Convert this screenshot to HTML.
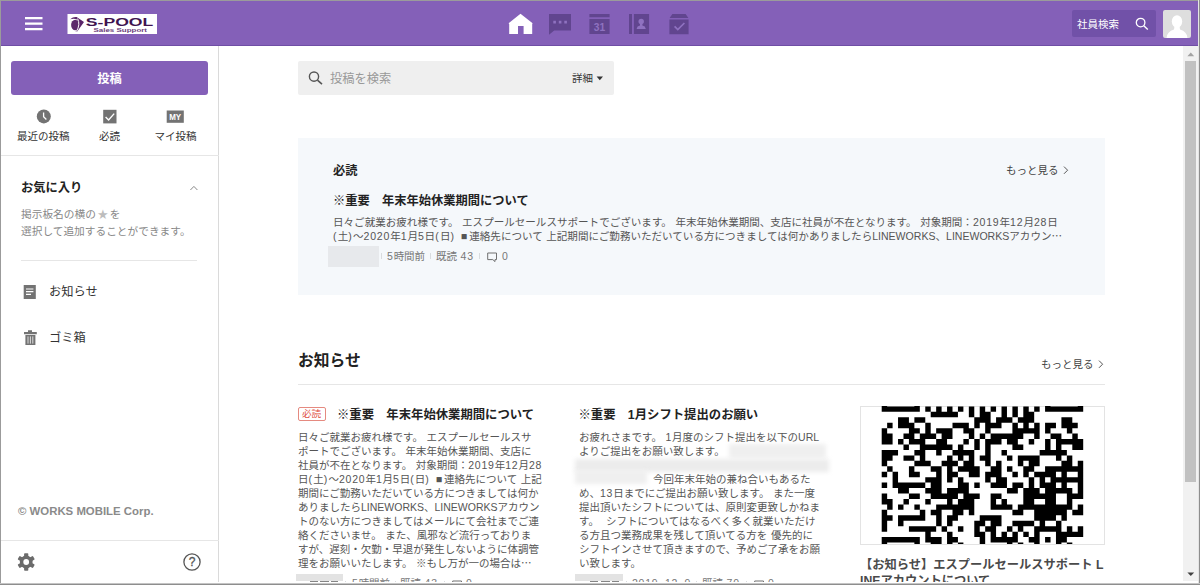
<!DOCTYPE html>
<html lang="ja">
<head>
<meta charset="utf-8">
<title>S-POOL Sales Support</title>
<style>
*{margin:0;padding:0;box-sizing:border-box}
html,body{width:1200px;height:585px;overflow:hidden;background:#fff}
body{position:relative;font-family:"Liberation Sans","Noto Sans CJK JP",sans-serif;color:#333;font-size:10.5px}
.abs,.t,svg{position:absolute}
.t{white-space:nowrap;line-height:1}
b{font-weight:700}
/* frame */
#ft{left:0;top:0;width:1200px;height:1px;background:#9b9b9b}
#fl{left:0;top:0;width:1px;height:585px;background:#9b9b9b}
#fr{left:1198px;top:0;width:2px;height:585px;background:linear-gradient(90deg,#e4e4e4 0,#e4e4e4 50%,#8e8e8e 50%)}
#fb{left:0;top:583px;width:1200px;height:2px;background:linear-gradient(180deg,#c4c4c4 0,#c4c4c4 50%,#8e8e8e 50%)}
#clip{left:0;top:0;width:1198px;height:582px;overflow:hidden}
/* header */
#hd{left:0;top:0;width:1198px;height:46px;background:#8460b8;border-bottom:1px solid #6f4ea5}
#logo{left:67px;top:14px;width:90px;height:20px;background:#fff}
#hsearch{left:1072px;top:10px;width:84px;height:27px;background:#7151a8;border-radius:2px}
#avatar{left:1163px;top:10px;width:28px;height:28px;background:#dedede;border-radius:2px;overflow:hidden}
/* sidebar */
#sb{left:0;top:46px;width:219px;height:536px;border-right:1px solid #dadada;background:#fff}
#postbtn{left:11px;top:61px;width:197px;height:34px;overflow:hidden;background:#8460b8;border-radius:3px;color:#fff;font-weight:700;font-size:12.25px;text-align:center;line-height:37px}
.hl{height:1px;background:#e6e6e6}
/* scrollbar */
#sc{left:1183px;top:46px;width:15px;height:535px;background:#f1f1f1}
#th{left:1185px;top:61px;width:11px;height:421px;background:#c1c1c1}
/* main */
#search{left:298px;top:60.5px;width:316px;height:34.5px;background:#efefef;border-radius:2px}
#pin{left:298px;top:138px;width:807px;height:157px;background:#f5f8fb}
.body{color:#555;font-size:10.5px;line-height:14px;white-space:nowrap;word-spacing:.6px}
i{font-style:normal;letter-spacing:.78px}
u{text-decoration:none;display:inline-block;width:1em;text-align:center}
em{font-style:normal;letter-spacing:1.2px}
s{text-decoration:none;font-family:"Noto Sans CJK JP",sans-serif}
.meta{color:#777;font-size:10.5px;word-spacing:.6px}
.dash{top:581px;height:1px;background:#858585}
.sep{width:1px;height:6px;background:#d9dcdf}
.blur{position:absolute;background:#efefef;filter:blur(2px)}
</style>
</head>
<body>
<div id="clip" class="abs">
  <!-- HEADER -->
  <div id="hd" class="abs"></div>
  <svg style="left:25px;top:17px" width="18" height="14" viewBox="0 0 18 14"><path d="M0 0h17.5v2.2H0zM0 5.5h17.5v2.2H0zM0 11h17.5v2.2H0z" fill="#fff"/></svg>

  <svg style="left:67px;top:14px" width="90" height="20" viewBox="0 0 90 20">
    <rect x="0.5" y="0" width="89.5" height="20.2" fill="#fff"/>
    <path d="M3.2 5.2 Q6 2.6 9.6 3 L17 8 L10.2 17.6 L8.6 17.8 Q12.6 11 10 5.4 Q7 4 3.2 5.2Z" fill="#5a2468"/>
    <ellipse cx="8.2" cy="11" rx="4.1" ry="5.3" fill="#5e2a6c"/>
    <path d="M10.6 4.6 Q13.6 10.5 9.4 17.6" stroke="#fff" stroke-width="1" fill="none"/>
    <text x="18.8" y="12.1" font-family="'Liberation Sans',sans-serif" font-weight="700" font-size="10.6" fill="#3f1450" textLength="67.5" lengthAdjust="spacingAndGlyphs">S-POOL</text>
    <text x="26.5" y="17.7" font-family="'Liberation Sans',sans-serif" font-weight="700" font-size="6.2" fill="#6a3a7a" textLength="53.5" lengthAdjust="spacingAndGlyphs">Sales Support</text>
  </svg>
  <!-- home -->
  <svg style="left:508px;top:13px" width="26" height="22" viewBox="0 0 26 22"><path d="M12.5 0.7 L24.6 10.2 L24.2 11 L24.2 21 L15.6 21 L15.6 13 L10 13 L10 21 L1.2 21 L1.2 11 L0.6 10.2Z" fill="#fff"/></svg>
  <!-- chat -->
  <svg style="left:549px;top:14px" width="23" height="21" viewBox="0 0 23 21"><path d="M0 0h22v16.6H5.2L0 20.8z" fill="#61458f"/><path d="M4.3 6.8h2.6v2.6H4.3zM9.8 6.8h2.6v2.6H9.8zM15.3 6.8h2.6v2.6h-2.6z" fill="#8f72c0"/></svg>
  <!-- calendar -->
  <svg style="left:589px;top:14px" width="22" height="21" viewBox="0 0 22 21"><path d="M0.4 0h20.2v3.2H0.4zM0.4 5.1h20.2v14.9H0.4z" fill="#61458f"/><text x="10.5" y="17.1" text-anchor="middle" font-family="'Liberation Sans',sans-serif" font-weight="700" font-size="11.2" fill="#8f72c0" textLength="11.4" lengthAdjust="spacingAndGlyphs">31</text></svg>
  <!-- contacts -->
  <svg style="left:629px;top:14px" width="21" height="21" viewBox="0 0 21 21"><path d="M0 0h3v20H0zM4.9 0h15.2v20H4.9z" fill="#61458f"/><circle cx="12.2" cy="7.4" r="2.7" fill="#8f72c0"/><path d="M7.6 15 L8.6 12.6 L11 11.4 L11 9.6 H13.4 L13.4 11.4 L15.8 12.6 L16.8 15z" fill="#8f72c0"/></svg>
  <!-- task -->
  <svg style="left:669px;top:14px" width="21" height="21" viewBox="0 0 21 21"><path d="M3.4 0h13.2L19.4 4H0.6zM0.4 5.6h19.2v14.6H0.4z" fill="#61458f"/><path d="M5.6 12.4l3.2 3.2 6.6-6.6" stroke="#8f72c0" stroke-width="1.7" fill="none"/></svg>
  <div id="hsearch" class="abs"></div>
  <div class="t" style="left:1077px;top:19px;font-size:10.5px;color:#fff">社員検索</div>
  <!-- header search magnifier -->
  <svg style="left:1135px;top:17px" width="14" height="14" viewBox="0 0 14 14"><circle cx="5.6" cy="5.6" r="4.3" stroke="#fff" stroke-width="1.3" fill="none"/><path d="M8.8 8.8L12.8 12.6" stroke="#fff" stroke-width="1.4"/></svg>
  <div id="avatar" class="abs"><svg style="left:0;top:0" width="28" height="28" viewBox="0 0 28 28"><ellipse cx="14" cy="11.5" rx="5.2" ry="6.2" fill="#fff"/><path d="M3.5 28 Q4 21.5 11 19.5 L11.5 16 H16.5 L17 19.5 Q24 21.5 24.5 28z" fill="#fff"/></svg></div>

  <!-- SIDEBAR -->
  <div id="sb" class="abs"></div>
  <div id="postbtn" class="abs">投稿</div>
  <div class="t" style="left:17px;top:131px;font-size:10.5px;color:#333">最近の投稿</div>
  <div class="t" style="left:99px;top:131px;font-size:10.5px;color:#333">必読</div>
  <div class="t" style="left:154.5px;top:131px;font-size:10.5px;color:#333">マイ投稿</div>
  <div class="abs hl" style="left:1px;top:155px;width:218px"></div>
  <div class="t" style="left:21px;top:182px;font-size:12.25px;font-weight:700;color:#222">お気に入り</div>
  <div class="t" style="left:21px;top:209px;font-size:10.7px;color:#888">掲示板名の横の<span style="color:#bdbdbd;font-family:'Noto Sans CJK JP',sans-serif;display:inline-block;width:14px;text-align:center">★</span>を</div>
  <div class="t" style="left:21px;top:225.5px;font-size:10.7px;color:#888">選択して追加することができます。</div>
  <div class="abs hl" style="left:21px;top:260px;width:176px"></div>
  <div class="t" style="left:49px;top:286px;font-size:12.25px;color:#333">お知らせ</div>
  <div class="t" style="left:49px;top:332px;font-size:12.25px;color:#333">ゴミ箱</div>
  <div class="t" style="left:18px;top:506px;font-size:11.4px;font-weight:700;color:#8a8a8a">© WORKS MOBILE Corp.</div>
  <div class="abs hl" style="left:1px;top:540px;width:218px"></div>

  <svg style="left:36px;top:109px" width="16" height="16" viewBox="0 0 16 16"><circle cx="7.8" cy="7.4" r="7" fill="#737373"/><path d="M7.6 3.4V7.8L10.4 10.4" stroke="#fff" stroke-width="1.3" fill="none"/></svg>
  <svg style="left:103px;top:109px" width="15" height="16" viewBox="0 0 15 16"><rect x="0.2" y="0.8" width="13.3" height="13.6" fill="#737373"/><path d="M2.6 8l3 3 5.6-6.4" stroke="#fff" stroke-width="1.4" fill="none"/></svg>
  <svg style="left:166px;top:110px" width="19" height="14" viewBox="0 0 19 14"><rect x="0.7" y="0.5" width="17.1" height="12.3" fill="#737373"/><text x="9.2" y="9.9" text-anchor="middle" font-family="'Liberation Sans',sans-serif" font-weight="700" font-size="8.2" fill="#fff" textLength="12" lengthAdjust="spacingAndGlyphs">MY</text></svg>
  <svg style="left:189px;top:184px" width="10" height="8" viewBox="0 0 10 8"><path d="M1.4 6L4.9 2.4 8.4 6" stroke="#888" stroke-width="1" fill="none"/></svg>
  <svg style="left:23px;top:285px" width="14" height="15" viewBox="0 0 14 15"><rect x="0.7" y="0" width="12.1" height="14" fill="#737373"/><path d="M3 4h7.4M3 6.7h7.4M3 9.4h5" stroke="#fff" stroke-width="1.2"/></svg>
  <svg style="left:23px;top:330px" width="15" height="16" viewBox="0 0 15 16"><path d="M5 0.3h4v1.7H5zM1 2h12.8v2.2H1zM2.4 5h10v10H2.4z" fill="#737373"/><path d="M5 6.4v7.2M7.4 6.4v7.2M9.8 6.4v7.2" stroke="#ddd" stroke-width="1"/></svg>
  <svg style="left:17px;top:553px" width="19" height="19" viewBox="-9.5 -9.5 19 19"><g fill="#6b6b6b" transform="translate(-0.3 -0.5)"><circle r="6.4"/><rect x="-2.1" y="-8.8" width="4.2" height="17.6" rx="0.8"/><rect x="-2.1" y="-8.8" width="4.2" height="17.6" rx="0.8" transform="rotate(60)"/><rect x="-2.1" y="-8.8" width="4.2" height="17.6" rx="0.8" transform="rotate(120)"/><circle r="2.9" fill="#fff"/></g></svg>
  <svg style="left:183px;top:553px" width="19" height="19" viewBox="0 0 19 19"><circle cx="9" cy="9" r="8.1" stroke="#555" stroke-width="1.3" fill="none"/><text x="9" y="13" text-anchor="middle" font-family="'Liberation Sans',sans-serif" font-weight="400" font-size="12" fill="#555" stroke="#555" stroke-width=".3">?</text></svg>

  <!-- MAIN -->
  <div id="search" class="abs"></div>
  <div class="t" style="left:330px;top:73px;font-size:12.25px;color:#999">投稿を検索</div>
  <div class="t" style="left:572px;top:73px;font-size:10.5px;color:#333">詳細</div>


  <svg style="left:308px;top:70px" width="16" height="16" viewBox="0 0 16 16"><circle cx="6" cy="6.6" r="4.6" stroke="#555" stroke-width="1.4" fill="none"/><path d="M9.4 10.2L14 14.2" stroke="#555" stroke-width="1.6"/></svg>
  <svg style="left:596px;top:76px" width="8" height="5" viewBox="0 0 8 5"><path d="M0.6 0.6h6.4L3.8 4.2z" fill="#333"/></svg>
  <div id="pin" class="abs"></div>
  <div class="t" style="left:333px;top:165px;font-size:12.25px;font-weight:700;color:#222">必読</div>
  <div class="t" style="left:1006px;top:165px;font-size:10.5px;color:#444">もっと見る</div>
  <div class="t" style="left:333px;top:194.5px;font-size:12.25px;font-weight:700;color:#222">※重要　年末年始休業期間について</div>
  <div class="abs body" style="left:333px;top:214.5px;font-size:10.56px">日々ご就業お疲れ様です。 エスプールセールスサポートでございます。 年末年始休業期間、支店に社員が不在となります。 対象期間：<i>2019</i>年<i>12</i>月<i>28</i>日<br><em>(</em>土<em>)</em>～<i>2020</i>年<i>1</i>月<i>5</i>日<em>(</em>日<em>)</em> <u>■</u>連絡先について 上記期間にご勤務いただいている方につきましては何かありましたらLINEWORKS、LINEWORKSアカウン<s>…</s></div>
  <div class="blur" style="left:327.5px;top:246px;width:51.5px;height:21px;background:#e7e9ec;filter:blur(.7px)"></div>
  <div class="t meta" style="left:387px;top:251px"><i>5</i>時間前</div>
  <div class="t meta" style="left:436px;top:251px">既読 <i><i>43</i></i></div>
  <div class="t meta" style="left:502px;top:251px"><i><i>0</i></i></div>

  <div class="t" style="left:298px;top:353px;font-size:15.75px;font-weight:700;color:#222">お知らせ</div>
  <div class="t" style="left:1041px;top:359px;font-size:10.5px;color:#444">もっと見る</div>
  <div class="abs hl" style="left:298px;top:384px;width:807px"></div>

  <!-- col1 -->
  <div class="abs" style="left:298px;top:407px;width:28px;height:14px;border:1px solid #e58a80;border-radius:2px"></div>
  <div class="t" style="left:302px;top:409px;font-size:9.6px;color:#e0503f">必読</div>
  <div class="t" style="left:337px;top:408.7px;font-size:12.35px;font-weight:700;color:#222">※重要　年末年始休業期間について</div>
  <div class="abs body" style="left:298px;top:430px">日々ご就業お疲れ様です。 エスプールセールスサ<br>ポートでございます。 年末年始休業期間、支店に<br>社員が不在となります。 対象期間：<i>2019</i>年<i>12</i>月<i>28</i><br>日<em>(</em>土<em>)</em>～<i>2020</i>年<i>1</i>月<i>5</i>日<em>(</em>日<em>)</em> <u>■</u>連絡先について 上記<br>期間にご勤務いただいている方につきましては何か<br>ありましたらLINEWORKS、LINEWORKSアカウン<br>トのない方につきましてはメールにて会社までご連<br>絡くださいませ。 また、風邪など流行っておりま<br>すが、遅刻・欠勤・早退が発生しないように体調管<br>理をお願いいたします。 ※もし万が一の場合は<s>…</s></div>
  <div class="blur" style="left:296px;top:574px;width:47px;height:7px;background:#e3e3e3;filter:blur(.5px)"></div><div class="abs dash" style="left:309.5px;width:8px"></div><div class="abs dash" style="left:319.5px;width:9px"></div><div class="abs dash" style="left:331px;width:7px"></div>
  <div class="t meta" style="left:352px;top:578px"><i>5</i>時間前</div>
  <div class="t meta" style="left:400px;top:578px">既読 <i><i>43</i></i></div>
  <div class="t meta" style="left:466px;top:578px"><i><i>0</i></i></div>

  <!-- col2 -->
  <div class="t" style="left:578.5px;top:408.7px;font-size:12.35px;font-weight:700;color:#222">※重要　1月シフト提出のお願い</div>
  <div class="abs body" style="left:579px;top:430px">お疲れさまです。 <i>1</i>月度のシフト提出を以下のURL<br>よりご提出をお願い致します。<br>&nbsp;<br><span style="padding-left:74px">今回年末年始の兼ね合いもあるた</span><br>め、<i>13</i>日までにご提出お願い致します。 また一度<br>提出頂いたシフトについては、原則変更致しかねま<br>す。&nbsp; シフトについてはなるべく多く就業いただけ<br>る方且つ業務成果を残して頂いてる方を 優先的に<br>シフトインさせて頂きますので、予めご了承をお願<br>い致します。</div>
  <div class="blur" style="left:729px;top:444px;width:97px;height:14px"></div>
  <div class="blur" style="left:575px;top:459px;width:254px;height:13px;background:#ececec"></div>
  <div class="blur" style="left:575px;top:470px;width:72px;height:14px"></div>
  <div class="blur" style="left:575px;top:573.5px;width:48px;height:7.2px;background:#e3e3e3;filter:blur(.5px)"></div><div class="abs dash" style="left:590px;width:8px"></div><div class="abs dash" style="left:600.5px;width:9px"></div><div class="abs dash" style="left:612px;width:6.5px"></div>
  <div class="t meta" style="left:632px;top:578px"><i><i>2019</i></i>. <i><i>12</i></i>. <i><i>9</i></i>.</div>
  <div class="t meta" style="left:702px;top:578px">既読 <i><i>70</i></i></div>
  <div class="t meta" style="left:768px;top:578px"><i><i>0</i></i></div>

  <!-- col3 -->
  <div class="abs" id="qrbox" style="left:860px;top:406px;width:245px;height:139px;border:1px solid #e3e3e3;overflow:hidden"></div>
  <svg style="left:861px;top:406px" width="243" height="138.4" viewBox="-3.801 5.931 44.620 25.413" preserveAspectRatio="none"><path d="M0 5h1v1h-1zM6 5h1v1h-1zM30 5h1v1h-1zM36 5h1v1h-1zM0 6h7v1h-7zM8 6h1v1h-1zM10 6h1v1h-1zM12 6h1v1h-1zM14 6h1v1h-1zM16 6h1v1h-1zM18 6h1v1h-1zM20 6h1v1h-1zM22 6h1v1h-1zM24 6h1v1h-1zM26 6h1v1h-1zM28 6h1v1h-1zM30 6h7v1h-7zM9 7h5v1h-5zM16 7h1v1h-1zM18 7h2v1h-2zM22 7h1v1h-1zM24 7h1v1h-1zM26 7h2v1h-2zM3 8h2v1h-2zM6 8h2v1h-2zM17 8h3v1h-3zM21 8h3v1h-3zM25 8h3v1h-3zM33 8h2v1h-2zM1 9h1v1h-1zM3 9h3v1h-3zM8 9h1v1h-1zM13 9h3v1h-3zM17 9h1v1h-1zM19 9h3v1h-3zM24 9h1v1h-1zM26 9h1v1h-1zM28 9h1v1h-1zM30 9h2v1h-2zM33 9h3v1h-3zM0 10h1v1h-1zM5 10h2v1h-2zM8 10h1v1h-1zM10 10h3v1h-3zM15 10h2v1h-2zM19 10h1v1h-1zM24 10h5v1h-5zM30 10h1v1h-1zM34 10h1v1h-1zM0 11h2v1h-2zM4 11h2v1h-2zM7 11h3v1h-3zM11 11h2v1h-2zM16 11h1v1h-1zM18 11h1v1h-1zM20 11h6v1h-6zM28 11h1v1h-1zM31 11h2v1h-2zM35 11h1v1h-1zM0 12h2v1h-2zM3 12h1v1h-1zM5 12h3v1h-3zM10 12h2v1h-2zM15 12h1v1h-1zM17 12h1v1h-1zM19 12h3v1h-3zM23 12h2v1h-2zM27 12h1v1h-1zM30 12h1v1h-1zM32 12h5v1h-5zM4 13h1v1h-1zM7 13h6v1h-6zM14 13h1v1h-1zM17 13h1v1h-1zM19 13h1v1h-1zM24 13h2v1h-2zM30 13h1v1h-1zM32 13h1v1h-1zM35 13h2v1h-2zM0 14h3v1h-3zM6 14h2v1h-2zM10 14h1v1h-1zM13 14h4v1h-4zM19 14h1v1h-1zM22 14h1v1h-1zM29 14h5v1h-5zM0 15h2v1h-2zM4 15h2v1h-2zM7 15h1v1h-1zM12 15h1v1h-1zM14 15h1v1h-1zM16 15h1v1h-1zM18 15h2v1h-2zM23 15h1v1h-1zM25 15h4v1h-4zM32 15h1v1h-1zM34 15h1v1h-1zM0 16h1v1h-1zM6 16h3v1h-3zM11 16h3v1h-3zM15 16h2v1h-2zM19 16h1v1h-1zM21 16h1v1h-1zM25 16h1v1h-1zM27 16h2v1h-2zM33 16h2v1h-2zM36 16h1v1h-1zM1 17h1v1h-1zM5 17h1v1h-1zM9 17h2v1h-2zM12 17h1v1h-1zM14 17h4v1h-4zM20 17h2v1h-2zM23 17h1v1h-1zM26 17h2v1h-2zM30 17h7v1h-7zM0 18h1v1h-1zM2 18h1v1h-1zM5 18h2v1h-2zM10 18h1v1h-1zM12 18h2v1h-2zM16 18h2v1h-2zM19 18h3v1h-3zM24 18h1v1h-1zM26 18h1v1h-1zM28 18h4v1h-4zM33 18h1v1h-1zM36 18h1v1h-1zM2 19h1v1h-1zM8 19h3v1h-3zM12 19h1v1h-1zM14 19h1v1h-1zM19 19h1v1h-1zM21 19h2v1h-2zM27 19h1v1h-1zM29 19h1v1h-1zM31 19h6v1h-6zM0 20h1v1h-1zM2 20h6v1h-6zM9 20h2v1h-2zM14 20h2v1h-2zM17 20h1v1h-1zM20 20h3v1h-3zM24 20h2v1h-2zM27 20h1v1h-1zM29 20h3v1h-3zM33 20h1v1h-1zM36 20h1v1h-1zM3 21h2v1h-2zM8 21h3v1h-3zM12 21h4v1h-4zM23 21h2v1h-2zM26 21h3v1h-3zM30 21h5v1h-5zM36 21h1v1h-1zM0 22h1v1h-1zM5 22h2v1h-2zM9 22h5v1h-5zM15 22h3v1h-3zM20 22h2v1h-2zM26 22h6v1h-6zM34 22h3v1h-3zM0 23h2v1h-2zM4 23h1v1h-1zM8 23h1v1h-1zM12 23h1v1h-1zM14 23h3v1h-3zM20 23h1v1h-1zM22 23h1v1h-1zM26 23h2v1h-2zM30 23h2v1h-2zM34 23h1v1h-1zM1 24h1v1h-1zM3 24h1v1h-1zM6 24h1v1h-1zM10 24h7v1h-7zM20 24h4v1h-4zM25 24h10v1h-10zM36 24h1v1h-1zM0 25h1v1h-1zM7 25h1v1h-1zM9 25h2v1h-2zM13 25h2v1h-2zM16 25h1v1h-1zM24 25h2v1h-2zM28 25h6v1h-6zM35 25h2v1h-2zM0 26h2v1h-2zM3 26h5v1h-5zM10 26h1v1h-1zM12 26h2v1h-2zM18 26h4v1h-4zM28 26h4v1h-4zM33 26h1v1h-1zM0 27h1v1h-1zM3 27h1v1h-1zM10 27h1v1h-1zM12 27h1v1h-1zM17 27h2v1h-2zM20 27h2v1h-2zM24 27h4v1h-4zM29 27h1v1h-1zM32 27h1v1h-1zM0 28h1v1h-1zM5 28h5v1h-5zM11 28h1v1h-1zM14 28h1v1h-1zM17 28h1v1h-1zM19 28h2v1h-2zM23 28h1v1h-1zM25 28h1v1h-1zM28 28h5v1h-5zM34 28h1v1h-1zM36 28h1v1h-1zM8 29h1v1h-1zM12 29h1v1h-1zM17 29h2v1h-2zM20 29h1v1h-1zM22 29h1v1h-1zM24 29h1v1h-1zM26 29h1v1h-1zM28 29h1v1h-1zM32 29h5v1h-5zM0 30h7v1h-7zM8 30h3v1h-3zM12 30h2v1h-2zM18 30h1v1h-1zM20 30h5v1h-5zM27 30h2v1h-2zM30 30h1v1h-1zM32 30h2v1h-2zM0 31h1v1h-1zM6 31h1v1h-1zM9 31h2v1h-2zM12 31h1v1h-1zM14 31h1v1h-1zM18 31h1v1h-1zM23 31h1v1h-1zM25 31h1v1h-1zM28 31h1v1h-1zM32 31h1v1h-1zM34 31h1v1h-1z" fill="#000"/></svg>
  <div class="abs" style="left:860px;top:556.5px;width:250px;font-size:12.25px;font-weight:700;color:#4a4a4a;line-height:16px;white-space:nowrap">【お知らせ】エスプールセールスサポート L<br>INEアカウントについて</div>


  <svg style="left:1062px;top:165px" width="8" height="10" viewBox="0 0 8 10"><path d="M2 1.6L5.6 5.2 2 8.8" stroke="#555" stroke-width="1" fill="none"/></svg>
  <svg style="left:1097px;top:359px" width="8" height="10" viewBox="0 0 8 10"><path d="M2 1.6L5.6 5.2 2 8.8" stroke="#555" stroke-width="1" fill="none"/></svg>
  <div class="abs sep" style="left:380.5px;top:253px"></div><div class="abs sep" style="left:430px;top:253px"></div><div class="abs sep" style="left:479px;top:253px"></div>
  <svg class="cm" style="left:486px;top:251px" width="13" height="13" viewBox="0 0 13 13"><path d="M1.7 2h8.8v6.6H9v2L6.8 8.6H1.7z" stroke="#707070" stroke-width="1" fill="none"/></svg>
  <div class="abs sep" style="left:345px;top:581px"></div><div class="abs sep" style="left:395px;top:581px"></div><div class="abs sep" style="left:444px;top:581px"></div>
  <svg class="cm" style="left:451px;top:579px" width="13" height="13" viewBox="0 0 13 13"><path d="M1.7 2h8.8v6.6H9v2L6.8 8.6H1.7z" stroke="#707070" stroke-width="1" fill="none"/></svg>
  <div class="abs sep" style="left:626px;top:581px"></div><div class="abs sep" style="left:696px;top:581px"></div><div class="abs sep" style="left:746px;top:581px"></div>
  <svg class="cm" style="left:753px;top:579px" width="13" height="13" viewBox="0 0 13 13"><path d="M1.7 2h8.8v6.6H9v2L6.8 8.6H1.7z" stroke="#707070" stroke-width="1" fill="none"/></svg>
  <!-- scrollbar -->
  <div id="sc" class="abs"></div>
  <div id="th" class="abs"></div>
  <svg style="left:1186px;top:51px" width="10" height="7" viewBox="0 0 10 7"><path d="M1.4 5.2L4.8 1.6 8.2 5.2z" fill="#a3a3a3"/></svg>
  <svg style="left:1186px;top:571px" width="10" height="7" viewBox="0 0 10 7"><path d="M1.4 1.4L8.2 1.4 4.8 5z" fill="#404040"/></svg>
</div>
<div id="ft" class="abs"></div><div id="fl" class="abs"></div><div id="fr" class="abs"></div><div id="fb" class="abs"></div>
</body>
</html>
